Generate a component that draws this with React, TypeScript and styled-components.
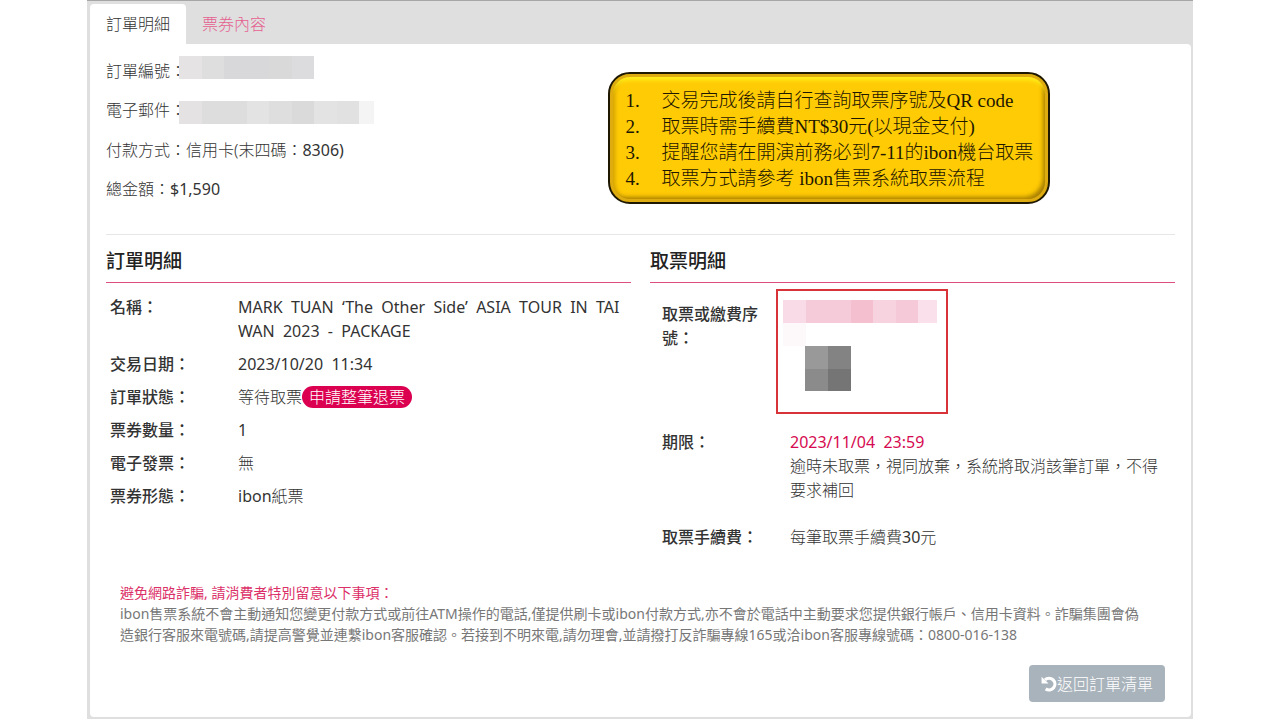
import React from "react";
import styled, { createGlobalStyle } from "styled-components";

const GlobalStyle = createGlobalStyle`
  * { box-sizing: border-box; }
  body {
    margin: 0;
    background: #fff;
    color: #333;
    font-family: "Noto Sans", "Noto Sans CJK TC", sans-serif;
    font-size: 16px;
    font-weight: 300;
    line-height: 24px;
  }
  p, h2, dl, dt, dd, ol { margin: 0; padding: 0; }
`;

const Shell = styled.main`
  max-width: 1106px;
  margin: 0 auto;
  padding: 3px 2px 2px 3px;
  border-top: 1px solid #a6a6a6;
  background: #dfdfdf;
`;

const Tabs = styled.nav`
  display: flex;
`;

const Tab = styled.a<{ $active?: boolean }>`
  padding: 8px 16px;
  border-radius: 4px 4px 0 0;
  background: ${(p) => (p.$active ? "#fff" : "transparent")};
  color: ${(p) => (p.$active ? "#333" : "#e5608f")};
  text-decoration: none;
`;

const Pane = styled.section`
  padding: 12px 16px 15px;
  border-radius: 0 4px 4px 4px;
  background: #fff;
`;

const Summary = styled.div`
  display: flex;
  align-items: flex-start;
  padding-bottom: 30px;
  border-bottom: 1px solid #e6e6e6;
`;

const Info = styled.div`
  display: flex;
  flex: 0 0 47%;
  flex-direction: column;
  gap: 15px;
  padding-top: 3px;
`;

const InfoLine = styled.p`
  display: flex;
`;

const Latin = styled.span`
  font-weight: 400;
`;

const Mosaic = styled.span<{ $drop: number }>`
  display: flex;
  height: 23px;
  margin: ${(p) => p.$drop}px 0 -1px -7px;
`;

const Cell = styled.span<{ $color: string; $width?: number; $height?: number }>`
  width: ${(p) => p.$width ?? 23}px;
  height: ${(p) => p.$height ?? 23}px;
  background: ${(p) => p.$color};
`;

const Notice = styled.ol`
  flex: 0 1 441px;
  margin-top: 16px;
  padding: 14px 15px 10px;
  border: 2px solid #1f1800;
  border-radius: 22px;
  background: #ffcb05;
  box-shadow: inset 0 0 0 3px #deac10, inset 0 7px 4px -1px #fff01c, inset -5px -5px 4px #a87f00,
    inset 5px 0 4px #d0a000;
  color: #1d1700;
  font-family: "Liberation Serif", "Noto Sans CJK TC", serif;
  font-size: 19px;
  line-height: 26px;
  list-style: none;
  counter-reset: step;
`;

const NoticeItem = styled.li`
  display: flex;
  white-space: nowrap;
  counter-increment: step;
  &::before {
    content: counter(step) ".";
    flex: 0 0 36px;
  }
`;

const Columns = styled.div`
  display: grid;
  grid-template-columns: 1fr 1fr;
  gap: 19px;
`;

const Heading = styled.h2`
  padding: 12px 0 7px;
  border-bottom: 1px solid #dc4f80;
  color: #222;
  font-size: 19px;
  font-weight: 500;
  line-height: 28px;
`;

const OrderList = styled.dl`
  padding: 12px 4px;
`;

const PickupList = styled.dl`
  padding: 6px 12px;
`;

const Row = styled.div<{ $space: number }>`
  display: flex;
  align-items: flex-start;
  margin-bottom: ${(p) => p.$space}px;
`;

const Label = styled.dt<{ $top?: number }>`
  flex: 0 0 128px;
  padding: ${(p) => p.$top ?? 0}px 28px 0 0;
  color: #333;
  font-weight: 500;
`;

const Value = styled.dd`
  flex: 1;
  min-width: 0;
`;

const LatinValue = styled(Value)`
  font-weight: 400;
  word-break: break-all;
  white-space: pre-wrap;
`;

const Pill = styled.button`
  height: 22px;
  padding: 0 7px;
  border: 0;
  border-radius: 11px;
  background: #db0050;
  color: #fff;
  font: inherit;
  line-height: 20px;
`;

const Deadline = styled.span`
  display: block;
  color: #d60a50;
  font-weight: 400;
  white-space: pre;
`;

const CodeBox = styled.div`
  width: 172px;
  height: 125px;
  margin-left: -14px;
  padding: 9px 5px;
  border: 2px solid #d9333a;
`;

const CellRow = styled.div<{ $indent?: number }>`
  display: flex;
  padding-left: ${(p) => p.$indent ?? 0}px;
`;

const Warning = styled.div`
  padding: 0 26px 0 14px;
  color: #777;
  font-size: 14px;
  font-weight: 400;
  line-height: 21px;
`;

const WarningTitle = styled.p`
  color: #dc3068;
`;

const Footer = styled.footer`
  display: flex;
  justify-content: flex-end;
  padding: 20px 10px 0;
`;

const BackButton = styled.button`
  display: flex;
  align-items: center;
  height: 37px;
  padding: 0 12px;
  border: 0;
  border-radius: 4px;
  background: #a9b3bb;
  color: #fff;
  font: inherit;
`;

const UndoIcon = () => (
  <svg width="16" height="16" viewBox="0 0 17 17" aria-hidden="true">
    <path d="M4.2 4.2A6.2 6.2 0 1 1 5 13.7" fill="none" stroke="currentColor" strokeWidth="3.4" />
    <path d="M0.6 0.8 8 8H1.2A0.6 0.6 0 0 1 0.6 7.4Z" fill="currentColor" />
  </svg>
);

const numberCells = ["#e5e3e4", "#dedede", "#d8d8da", "#d8d8da", "#d9d9d9", "#dcdcde"];
const mailCells = ["#e4e2e3", "#dddddd", "#dddddd", "#e3e3e3", "#dedede", "#dadada", "#e3e3e3", "#e1e1e1"];
const codeCells = ["#f8dbe6", "#f6cbd9", "#f6cbd9", "#f4c0d0", "#f7d3df", "#f5c9d8"];

const cellWidth = (index: number) => (index % 2 ? 22 : 23);

const steps = [
  "交易完成後請自行查詢取票序號及QR code",
  "取票時需手續費NT$30元(以現金支付)",
  "提醒您請在開演前務必到7-11的ibon機台取票",
  "取票方式請參考 ibon售票系統取票流程",
];

export default function App() {
  return (
    <>
      <GlobalStyle />
      <Shell>
        <Tabs>
          <Tab href="#order" $active>訂單明細</Tab>
          <Tab href="#tickets">票券內容</Tab>
        </Tabs>
        <Pane id="order">
          <Summary>
            <Info>
              <InfoLine>
                訂單編號：
                <Mosaic $drop={-3} aria-hidden="true">
                  {numberCells.map((c, i) => <Cell key={i} $color={c} $width={cellWidth(i)} />)}
                </Mosaic>
              </InfoLine>
              <InfoLine>
                電子郵件：
                <Mosaic $drop={3} aria-hidden="true">
                  {mailCells.map((c, i) => <Cell key={i} $color={c} $width={cellWidth(i)} />)}
                  <Cell $color="#f4f4f4" $width={15} />
                </Mosaic>
              </InfoLine>
              <InfoLine>付款方式：信用卡(末四碼：<Latin>8306)</Latin></InfoLine>
              <InfoLine>總金額：<Latin>$1,590</Latin></InfoLine>
            </Info>
            <Notice>
              {steps.map((s) => <NoticeItem key={s}>{s}</NoticeItem>)}
            </Notice>
          </Summary>

          <Columns>
            <section>
              <Heading>訂單明細</Heading>
              <OrderList>
                <Row $space={9}>
                  <Label>名稱：</Label>
                  <LatinValue>{"MARK  TUAN  ‘The  Other  Side’  ASIA  TOUR  IN  TAIWAN  2023  -  PACKAGE"}</LatinValue>
                </Row>
                <Row $space={9}>
                  <Label>交易日期：</Label>
                  <LatinValue>{"2023/10/20  11:34"}</LatinValue>
                </Row>
                <Row $space={9}>
                  <Label>訂單狀態：</Label>
                  <Value>等待取票<Pill type="button">申請整筆退票</Pill></Value>
                </Row>
                <Row $space={9}>
                  <Label>票券數量：</Label>
                  <LatinValue>1</LatinValue>
                </Row>
                <Row $space={9}>
                  <Label>電子發票：</Label>
                  <Value>無</Value>
                </Row>
                <Row $space={9}>
                  <Label>票券形態：</Label>
                  <Value><Latin>ibon</Latin>紙票</Value>
                </Row>
              </OrderList>
            </section>
            <section>
              <Heading>取票明細</Heading>
              <PickupList>
                <Row $space={16}>
                  <Label $top={13}>取票或繳費序號：</Label>
                  <Value>
                    <CodeBox aria-hidden="true">
                      <CellRow>
                        {codeCells.map((c, i) => <Cell key={i} $color={c} $width={cellWidth(i)} />)}
                        <Cell $color="#f9e0ea" $width={19} />
                      </CellRow>
                      <CellRow><Cell $color="#fdf9fb" /></CellRow>
                      <CellRow $indent={22}>
                        <Cell $color="#999" />
                        <Cell $color="#838383" />
                      </CellRow>
                      <CellRow $indent={22}>
                        <Cell $color="#8b8b8b" $height={22} />
                        <Cell $color="#757575" $height={22} />
                      </CellRow>
                    </CodeBox>
                  </Value>
                </Row>
                <Row $space={23}>
                  <Label>期限：</Label>
                  <Value>
                    <Deadline>{"2023/11/04  23:59"}</Deadline>
                    逾時未取票，視同放棄，系統將取消該筆訂單，不得要求補回
                  </Value>
                </Row>
                <Row $space={27}>
                  <Label>取票手續費：</Label>
                  <Value>每筆取票手續費<Latin>30</Latin>元</Value>
                </Row>
              </PickupList>
            </section>
          </Columns>

          <Warning>
            <WarningTitle>避免網路詐騙, 請消費者特別留意以下事項：</WarningTitle>
            <p>
              ibon售票系統不會主動通知您變更付款方式或前往ATM操作的電話,僅提供刷卡或ibon付款方式,亦不會於電話中主動要求您提供銀行帳戶、信用卡資料。詐騙集團會偽造銀行客服來電號碼,請提高警覺並連繫ibon客服確認。若接到不明來電,請勿理會,並請撥打反詐騙專線165或洽ibon客服專線號碼：0800-016-138
            </p>
          </Warning>

          <Footer>
            <BackButton type="button"><UndoIcon />返回訂單清單</BackButton>
          </Footer>
        </Pane>
      </Shell>
    </>
  );
}
